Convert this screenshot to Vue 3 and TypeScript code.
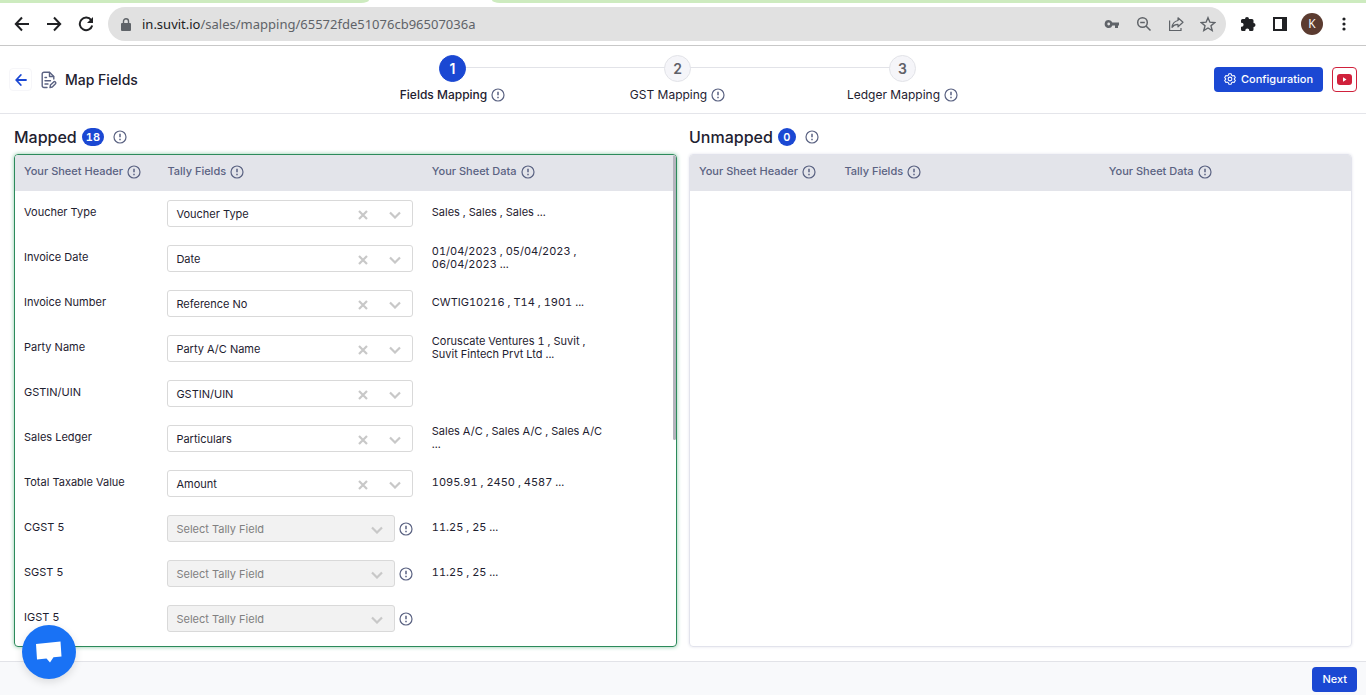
<script setup lang="ts">
import { defineComponent, h, ref } from 'vue'

interface MappedRow {
  header: string
  field: string
  data: string
}

const InfoIcon = defineComponent({
  name: 'InfoIcon',
  render() {
    return h(
      'svg',
      { viewBox: '0 0 14 14', width: 14, height: 14, fill: 'none', stroke: 'currentColor', 'stroke-width': 1.2, 'aria-hidden': 'true' },
      [
        h('circle', { cx: 7, cy: 7, r: 6 }),
        h('path', { d: 'M7 3.8v3.4M7 8.7v1.5', 'stroke-width': 1.5 }),
      ],
    )
  },
})

const columns = ['Your Sheet Header', 'Tally Fields', 'Your Sheet Data']

const steps = [
  { label: 'Fields Mapping', active: true },
  { label: 'GST Mapping', active: false },
  { label: 'Ledger Mapping', active: false },
]

const mappedCount = 18
const unmappedCount = 0

const rows = ref<MappedRow[]>([
  { header: 'Voucher Type', field: 'Voucher Type', data: 'Sales , Sales , Sales ...' },
  { header: 'Invoice Date', field: 'Date', data: '01/04/2023 , 05/04/2023 , 06/04/2023 ...' },
  { header: 'Invoice Number', field: 'Reference No', data: 'CWTIG10216 , T14 , 1901 ...' },
  { header: 'Party Name', field: 'Party A/C Name', data: 'Coruscate Ventures 1 , Suvit , Suvit Fintech Prvt Ltd ...' },
  { header: 'GSTIN/UIN', field: 'GSTIN/UIN', data: '' },
  { header: 'Sales Ledger', field: 'Particulars', data: 'Sales A/C , Sales A/C , Sales A/C ...' },
  { header: 'Total Taxable Value', field: 'Amount', data: '1095.91 , 2450 , 4587 ...' },
  { header: 'CGST 5', field: '', data: '11.25 , 25 ...' },
  { header: 'SGST 5', field: '', data: '11.25 , 25 ...' },
  { header: 'IGST 5', field: '', data: '' },
])
</script>

<template>
  <div class="page">
    <div class="browser">
      <div class="tabs"><span class="tab-left"></span><span class="tab-right"></span></div>
      <div class="toolbar">
        <button class="nav" aria-label="Back">
          <svg viewBox="0 0 16 16" width="16" height="16"><path d="M15 8H2M8 1.5 1.8 8 8 14.5" /></svg>
        </button>
        <button class="nav" aria-label="Forward">
          <svg viewBox="0 0 16 16" width="16" height="16"><path d="M1 8h13M8 1.5 14.2 8 8 14.5" /></svg>
        </button>
        <button class="nav" aria-label="Reload">
          <svg viewBox="0 0 16 16" width="16" height="16"><path d="M13.2 4.2A6.300 6.300 0 1 0 14.2 9.5" /><path class="solid" d="M15 1v6H9z" /></svg>
        </button>
        <div class="address">
          <svg class="lock" viewBox="0 0 10 13" width="10" height="13"><path d="M1 5h8a1 1 0 0 1 1 1v6a1 1 0 0 1-1 1H1a1 1 0 0 1-1-1V6a1 1 0 0 1 1-1z" fill="#5f6368" /><path d="M2.500 5.500V3.300a2.500 2.500 0 0 1 5 0v2.200" fill="none" stroke="#5f6368" stroke-width="1.400" /></svg>
          <span class="url"><b>in.suvit.io</b>/sales/mapping/65572fde51076cb96507036a</span>
          <button aria-label="Passwords">
            <svg viewBox="0 0 16 16" width="16" height="16"><path fill="#5f6368" fill-rule="evenodd" d="M4.700 4a4 4 0 1 0 3.700 5.400H11V12h3V9.400h1V6.600H8.400A4 4 0 0 0 4.700 4zm0 2.600a1.400 1.400 0 1 1 0 2.800 1.400 1.400 0 0 1 0-2.800z" /></svg>
          </button>
          <button aria-label="Zoom">
            <svg viewBox="0 0 16 16" width="16" height="16" fill="none" stroke="#5f6368" stroke-width="1.500"><circle cx="6.500" cy="6.500" r="4.800" /><path d="m10 10 4.500 4.500M4.200 6.500h4.600" /></svg>
          </button>
          <button aria-label="Share">
            <svg viewBox="0 0 16 16" width="16" height="16" fill="none" stroke="#5f6368" stroke-width="1.200"><path d="M1.600 4.500v10H13V12" /><path d="M10 1.800 15 6.300 10 10.800V8.400C7.300 8.400 5.500 9.200 4 11.300c.4-3.500 2.400-6.100 6-6.800z" stroke-linejoin="round" /></svg>
          </button>
          <button aria-label="Bookmark">
            <svg viewBox="0 0 16 16" width="16" height="16" fill="none" stroke="#5f6368" stroke-width="1.400"><path d="m8 1.700 1.900 4.500 4.800.4-3.700 3.200 1.200 4.700L8 12l-4.200 2.500L5 9.800 1.300 6.600l4.800-.4z" /></svg>
          </button>
        </div>
        <button class="nav ext" aria-label="Extensions">
          <svg viewBox="0 0 16 16" width="16" height="16"><path class="solid" d="M5 3a2 2 0 1 1 4 0h3a1.500 1.500 0 0 1 1.500 1.500V7a2 2 0 1 1 0 4v2.500A1.500 1.500 0 0 1 12 15H9.300v-.6a2 2 0 0 0-4 0v.6H2.500A1.500 1.500 0 0 1 1 13.500v-2.800h.6a2 2 0 0 0 0-4H1V4.500A1.500 1.500 0 0 1 2.500 3z" /></svg>
        </button>
        <button class="nav" aria-label="Side panel">
          <svg viewBox="0 0 16 16" width="16" height="16"><path class="solid" fill-rule="evenodd" d="M1 1h14v14H1zm2 2v10h7V3z" /></svg>
        </button>
        <button class="avatar" aria-label="Profile">K</button>
        <button class="nav" aria-label="Menu">
          <svg viewBox="0 0 16 16" width="16" height="16"><g class="solid"><circle cx="8" cy="3" r="1.600" /><circle cx="8" cy="8" r="1.600" /><circle cx="8" cy="13" r="1.600" /></g></svg>
        </button>
      </div>
    </div>

    <header class="app-header">
      <div class="title">
        <a href="#" class="back" aria-label="Go back">
          <svg viewBox="0 0 12 12" width="12" height="12" fill="none" stroke="#1b48d3" stroke-width="1.800" stroke-linecap="round" stroke-linejoin="round"><path d="M11 6H1.200M5.800 1 1.200 6l4.600 5" /></svg>
        </a>
        <svg class="doc" viewBox="0 0 16 18" width="16" height="18" fill="none" stroke="#5a6282" stroke-width="1.400" stroke-linecap="round" stroke-linejoin="round"><path d="M6 16.500H3a1.800 1.800 0 0 1-1.800-1.800V3A1.800 1.800 0 0 1 3 1.200h5.500L12.800 5.500V8" /><path d="M8.500 1.500v4h4M4 6.500h1.500M4 9.800h5.500M4 13h3" /><path d="m9 16.500.4-2.400 3.300-3.200c1.100-.9 2.700.8 1.800 1.900L11.300 16z" /></svg>
        <h1>Map Fields</h1>
      </div>
      <ol class="steps">
        <li v-for="(step, i) in steps" :key="step.label" :class="{ active: step.active }">
          <span class="dot">{{ i + 1 }}</span>
          <span class="step-label">{{ step.label }} <InfoIcon class="info" /></span>
        </li>
      </ol>
      <div class="actions">
        <button class="primary config">
          <svg viewBox="0 0 14 14" width="12" height="12" fill="none" stroke="#fff" stroke-width="1.200" stroke-linejoin="round"><path d="M5.600 1h2.800l.5 1.700 1.200.7 1.700-.5 1.400 2.400L12 6.500v1l1.200 1.200-1.400 2.400-1.700-.5-1.200.7L8.400 13H5.600l-.5-1.700-1.200-.7-1.700.5L.8 8.700 2 7.500v-1L.8 5.300l1.400-2.400 1.700.5 1.200-.7z" /><circle cx="7" cy="7" r="2.200" /></svg>
          Configuration
        </button>
        <button class="video" aria-label="Watch video">
          <svg viewBox="0 0 15 11" width="15" height="11"><rect width="15" height="11" rx="3" fill="#d0213c" /><path d="M6 3.300v4.400l3.500-2.200z" fill="#fff" /></svg>
        </button>
      </div>
    </header>

    <main class="content">
      <section>
        <h2>Mapped <span class="badge">{{ mappedCount }}</span><InfoIcon class="info" /></h2>
        <div class="panel mapped">
          <table>
            <thead>
              <tr><th v-for="col in columns" :key="col" scope="col"><span>{{ col }} <InfoIcon class="info" /></span></th></tr>
            </thead>
            <tbody>
              <tr v-for="(row, i) in rows" :key="row.header">
                <td><label :for="`field-${i}`">{{ row.header }}</label></td>
                <td>
                  <div class="field">
                    <div class="control" :class="{ disabled: !row.field }">
                      <select :id="`field-${i}`" :disabled="!row.field">
                        <option>{{ row.field || 'Select Tally Field' }}</option>
                      </select>
                      <button v-if="row.field" class="clear" aria-label="Clear selection">
                        <svg viewBox="0 0 10 10" width="10" height="10"><path d="m1 1 8 8M9 1 1 9" /></svg>
                      </button>
                      <svg class="chevron" viewBox="0 0 12 8" width="12" height="8"><path d="m1 1.500 5 5 5-5" /></svg>
                    </div>
                    <InfoIcon v-if="!row.field" class="info" />
                  </div>
                </td>
                <td><p>{{ row.data }}</p></td>
              </tr>
            </tbody>
          </table>
          <span class="thumb"></span>
        </div>
      </section>
      <section>
        <h2>Unmapped <span class="badge">{{ unmappedCount }}</span><InfoIcon class="info" /></h2>
        <div class="panel unmapped">
          <table>
            <thead>
              <tr><th v-for="col in columns" :key="col" scope="col"><span>{{ col }} <InfoIcon class="info" /></span></th></tr>
            </thead>
          </table>
        </div>
      </section>
    </main>

    <footer><button class="primary">Next</button></footer>

    <button class="chat" aria-label="Open chat">
      <svg viewBox="0 0 28 24" width="28" height="24"><path d="M1 4 25.500 1.500 26.500 16.500 18.500 17.300 15 22.500 11.500 18.500 2 19.500z" fill="#fff" /></svg>
    </button>
  </div>
</template>

<style>
body {
  margin: 0;
}
</style>

<style scoped>
* {
  box-sizing: border-box;
}
.page {
  display: flex;
  flex-direction: column;
  height: 100vh;
  overflow: hidden;
  background: #fff;
  color: #1e2130;
  font: 11px/13px Inter, "Liberation Sans", sans-serif;
}
button {
  display: flex;
  align-items: center;
  justify-content: center;
  padding: 0;
  border: 0;
  background: none;
  font: inherit;
}
svg {
  display: block;
  flex: none;
}
h1, h2, p, ol {
  margin: 0;
  padding: 0;
}

/* Browser bar */
.browser {
  flex: none;
  border-bottom: 1px solid #c8c8c8;
}
.tabs {
  display: flex;
  justify-content: space-between;
  height: 3px;
}
.tab-left, .tab-right {
  background: #cdebbf;
}
.tab-left {
  width: 27%;
  border-bottom-right-radius: 8px 3px;
}
.tab-right {
  width: 64%;
  border-bottom-left-radius: 8px 3px;
}
.toolbar {
  display: flex;
  align-items: center;
  gap: 16px;
  height: 42px;
  padding: 0 14px;
}
.nav svg {
  fill: none;
  stroke: #202124;
  stroke-width: 2;
}
.nav .solid {
  fill: #202124;
  stroke: none;
}
.address {
  display: flex;
  flex: 1;
  align-items: center;
  gap: 16px;
  height: 34px;
  margin-left: -2px;
  padding: 0 10px 0 13px;
  border-radius: 17px;
  background: #e1e1e1;
}
.url {
  flex: 1;
  color: #5f6368;
  font: 13px/20px "Noto Sans", "Open Sans", sans-serif;
}
.lock {
  margin-right: -5px;
}
.url b {
  color: #202124;
  font-weight: 400;
}
.ext {
  margin-left: -2px;
}
.avatar {
  width: 22px;
  height: 22px;
  margin: 0 -3px;
  border-radius: 50%;
  background: #5b3b30;
  color: #fff;
  font: 12px/22px "Open Sans", sans-serif;
}

/* Header */
.app-header {
  display: grid;
  flex: none;
  grid-template-columns: 331px 1fr 342px;
  align-items: center;
  height: 68px;
  padding: 0 9px;
  border-bottom: 1px solid #e4e5ea;
}
.title {
  display: flex;
  align-items: center;
}
.back {
  display: grid;
  width: 23px;
  height: 23px;
  margin-right: 9px;
  border: 1px solid #f6f6f9;
  border-radius: 4px;
  place-items: center;
}
h1 {
  margin-left: 8px;
  font-size: 14px;
  font-weight: 500;
  line-height: 20px;
}
.steps {
  display: flex;
  padding-bottom: 2px;
  list-style: none;
}
.steps li {
  display: flex;
  position: relative;
  flex: 1;
  flex-direction: column;
  align-items: center;
  gap: 6px;
}
.steps li + li::before {
  position: absolute;
  top: 12px;
  right: 50%;
  width: 100%;
  height: 1px;
  background: #e2e3e8;
  content: "";
}
.dot {
  position: relative;
  z-index: 1;
  width: 27px;
  height: 27px;
  border: 1px solid #e2e3e8;
  border-radius: 50%;
  background: #f5f5f9;
  color: #5f6068;
  font-size: 14px;
  font-weight: 600;
  line-height: 25px;
  text-align: center;
}
.active .dot {
  z-index: 2;
  border-color: #1b48d3;
  background: #1b48d3;
  color: #fff;
}
.step-label {
  display: flex;
  align-items: center;
  gap: 4px;
  font-size: 12px;
  line-height: 14px;
}
.active .step-label {
  font-weight: 500;
}
.info {
  color: #5a6282;
}
.actions {
  display: flex;
  justify-content: flex-end;
  gap: 9px;
}
.primary {
  gap: 5px;
  height: 25px;
  padding: 0 10px 1px;
  border-radius: 4px;
  background: #1b48d3;
  color: #fff;
  font-size: 11px;
  font-weight: 500;
}
.video {
  width: 25px;
  height: 25px;
  border: 1px solid #d0213c;
  border-radius: 4px;
}

/* Panels */
.content {
  display: grid;
  flex: 1;
  grid-template-columns: 1fr 1fr;
  gap: 12px;
  min-height: 0;
  padding: 12px 14px 14px;
}
section {
  display: flex;
  flex-direction: column;
  min-height: 0;
}
h2 {
  display: flex;
  align-items: center;
  margin-bottom: 6px;
  font-size: 16px;
  font-weight: 500;
  line-height: 22px;
}
.badge {
  min-width: 18px;
  height: 18px;
  margin: 0 9px 0 5px;
  padding: 0 4px;
  border-radius: 9px;
  background: #1b48d3;
  color: #fff;
  font-size: 11px;
  font-variant-numeric: tabular-nums;
  font-weight: 600;
  line-height: 18px;
  text-align: center;
}
.panel {
  position: relative;
  flex: 1;
  min-height: 0;
  overflow: hidden;
  border: 1px solid #e2e3ec;
  border-radius: 4px;
  box-shadow: 0 0 3px #e2e3ec;
}
.mapped {
  border-color: #2c8a5b;
  box-shadow: 0 0 4px #8cc9a8;
}
.thumb {
  position: absolute;
  top: 0;
  right: 0;
  width: 3px;
  height: 58%;
  border-radius: 2px;
  background: #b3b4bd;
}
table {
  width: 100%;
  border-collapse: collapse;
  table-layout: fixed;
}
th, td {
  padding: 0 7px;
  text-align: left;
}
th:first-child, td:first-child, .unmapped th {
  padding-left: 9px;
}
th:nth-child(1) {
  width: 22%;
}
th:nth-child(2) {
  width: 40%;
}
th {
  height: 36px;
  background: #e3e4ea;
  color: #5a6282;
  font-weight: 500;
}
th span {
  display: flex;
  align-items: flex-start;
  gap: 4px;
  padding-bottom: 2px;
  line-height: 12px;
}
td {
  height: 45px;
}
td label, td p {
  display: block;
  padding-bottom: 2px;
}
td p {
  max-width: 176px;
  font-variant-numeric: tabular-nums;
}
.field {
  display: flex;
  align-items: center;
  gap: 4px;
  max-width: 246px;
}
.control {
  display: flex;
  position: relative;
  flex: 1;
}
select {
  width: 100%;
  height: 27px;
  padding: 2px 60px 0 8px;
  border: 1px solid #d9d9d9;
  border-radius: 3px;
  background: #fff;
  color: #1e2130;
  font: inherit;
  appearance: none;
}
.disabled select {
  background: #f2f2f2;
  color: #808080;
  opacity: 1;
}
.clear, .chevron {
  position: absolute;
  top: 10px;
}
.clear {
  right: 45px;
}
.chevron {
  top: 11px;
  right: 12px;
}
.clear path, .chevron path {
  fill: none;
  stroke: #c8c8c8;
  stroke-width: 2.2;
}

footer {
  display: flex;
  flex: none;
  align-items: center;
  justify-content: flex-end;
  height: 34px;
  padding: 2px 9px 0;
  border-top: 1px solid #e2e3e8;
  background: #f8f9fb;
}
.chat {
  position: fixed;
  bottom: 16px;
  left: 22px;
  width: 54px;
  height: 54px;
  border-radius: 50%;
  background: #1972f5;
  box-shadow: 0 3px 8px rgba(0, 0, 0, 0.12);
}
</style>
